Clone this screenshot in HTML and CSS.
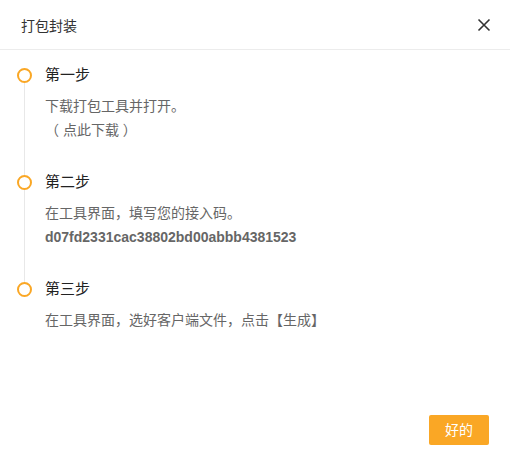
FILE: index.html
```html
<!DOCTYPE html>
<html lang="zh-CN">

<head>
    <meta charset="UTF-8">
    <meta name="viewport" content="width=device-width, initial-scale=1.0">
    <title>打包封装</title>
    <link rel="stylesheet" href="styles.css">
</head>

<body>
    <div class="modal">
        <header class="modal-header">
            <h1>打包封装</h1>
            <a href="#" class="close" title="关闭">
                <svg width="14" height="14" viewBox="0 0 14 14">
                    <path d="M1.5 1.5 L12.5 12.5 M12.5 1.5 L1.5 12.5" stroke="#333" stroke-width="1.6" fill="none" />
                </svg>
            </a>
        </header>

        <main class="modal-body">
            <!-- 步骤列表 -->
            <ul class="steps">
                <li class="step">
                    <div class="step-title">第一步</div>
                    <div class="step-desc">
                        <p>下载打包工具并打开。</p>
                        <p><a href="#" class="link">（ 点此下载 ）</a></p>
                    </div>
                </li>
                <li class="step">
                    <div class="step-title">第二步</div>
                    <div class="step-desc">
                        <p>在工具界面，填写您的接入码。</p>
                        <p class="code">d07fd2331cac38802bd00abbb4381523</p>
                    </div>
                </li>
                <li class="step">
                    <div class="step-title">第三步</div>
                    <div class="step-desc">
                        <p>在工具界面，选好客户端文件，点击【生成】</p>
                    </div>
                </li>
            </ul>
        </main>

        <footer class="modal-footer">
            <a href="#" class="btn">好的</a>
        </footer>
    </div>
</body>

</html>
```

FILE: styles.css
```css
/* Reset dasar */
html,
body {
    margin: 0;
    height: 100%;
}

body {
    font-family: "Liberation Sans", "Noto Sans CJK SC", sans-serif;
    background: #fff;
    color: #333;
}

.modal {
    height: 100%;
    display: flex;
    flex-direction: column;
    background: #fff;
}

.modal-header {
    height: 50px;
    box-sizing: border-box;
    padding: 0 19px 0 21px;
    border-bottom: 1px solid #ececec;
    display: flex;
    align-items: center;
    justify-content: space-between;
}

.modal-header h1 {
    margin: 0;
    font-size: 14px;
    font-weight: normal;
    color: #333;
}

.close {
    display: flex;
    padding: 0;
}

.modal-body {
    flex: 1;
    padding: 14px 20px 0 17px;
}

.steps {
    list-style: none;
    margin: 0;
    padding: 0;
}

.step {
    position: relative;
    padding: 0 0 29px 28px;
}

/* garis vertikal */
.step::before {
    content: "";
    position: absolute;
    left: 7px;
    top: 18px;
    bottom: -4px;
    width: 1px;
    background: #e8e8e8;
}

.step:last-child::before {
    display: none;
}

/* lingkaran */
.step::after {
    content: "";
    position: absolute;
    left: 0;
    top: 4px;
    width: 11px;
    height: 11px;
    border: 2px solid #faa725;
    border-radius: 50%;
    background: #fff;
}

.step-title {
    font-size: 15px;
    line-height: 22px;
    color: #222;
}

.step-desc {
    margin-top: 8px;
    font-size: 14px;
    line-height: 24px;
    color: #666;
}

.step-desc p {
    margin: 0;
}

.link {
    color: #666;
    text-decoration: none;
}

.code {
    font-weight: bold;
}

.modal-footer {
    display: flex;
    justify-content: flex-end;
    padding: 0 21px 13px;
}

.btn {
    display: inline-block;
    width: 60px;
    height: 30px;
    line-height: 30px;
    text-align: center;
    background: #faa725;
    color: #fff;
    font-size: 14px;
    text-decoration: none;
    border-radius: 2px;
}
```
